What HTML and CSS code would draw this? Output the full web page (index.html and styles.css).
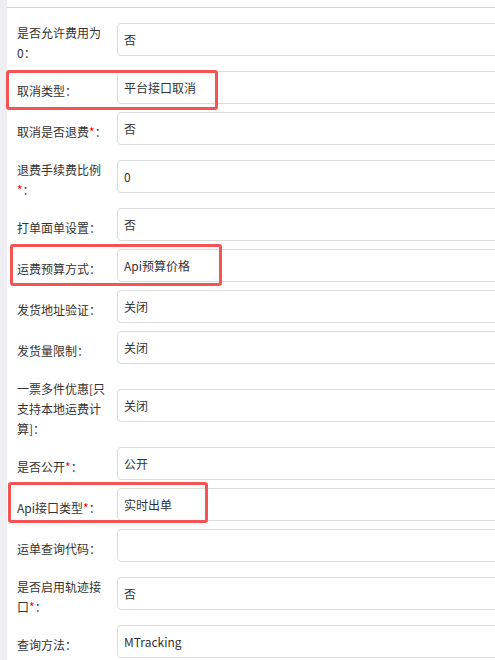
FILE: index.html
```html
<!DOCTYPE html>
<html lang="zh-CN">
<head>
    <meta charset="UTF-8">
    <title>渠道设置</title>
    <link rel="stylesheet" href="styles.css">
</head>
<body>
    <div class="page">
        <div class="side"></div>
        <div class="main">
            <form class="form">
                <div class="row">
                    <label class="label">是否允许费用为0：</label>
                    <input class="field" type="text" value="否" readonly>
                </div>
                <div class="row">
                    <label class="label">取消类型：</label>
                    <input class="field" type="text" value="平台接口取消" readonly>
                </div>
                <div class="row">
                    <label class="label">取消是否退费<span class="req">*</span>：</label>
                    <input class="field" type="text" value="否" readonly>
                </div>
                <div class="row">
                    <label class="label">退费手续费比例<span class="req">*</span>：</label>
                    <input class="field" type="text" value="0" readonly>
                </div>
                <div class="row">
                    <label class="label">打单面单设置：</label>
                    <input class="field" type="text" value="否" readonly>
                </div>
                <div class="row">
                    <label class="label">运费预算方式：</label>
                    <input class="field" type="text" value="Api预算价格" readonly>
                </div>
                <div class="row">
                    <label class="label">发货地址验证：</label>
                    <input class="field" type="text" value="关闭" readonly>
                </div>
                <div class="row">
                    <label class="label">发货量限制：</label>
                    <input class="field" type="text" value="关闭" readonly>
                </div>
                <div class="row">
                    <label class="label">一票多件优惠[只支持本地运费计算]：</label>
                    <input class="field" type="text" value="关闭" readonly>
                </div>
                <div class="row">
                    <label class="label">是否公开<span class="req">*</span>：</label>
                    <input class="field" type="text" value="公开" readonly>
                </div>
                <div class="row">
                    <label class="label">Api接口类型<span class="req">*</span>：</label>
                    <input class="field" type="text" value="实时出单" readonly>
                </div>
                <div class="row">
                    <label class="label">运单查询代码：</label>
                    <input class="field" type="text" value="" readonly>
                </div>
                <div class="row">
                    <label class="label">是否启用轨迹接口<span class="req">*</span>：</label>
                    <input class="field" type="text" value="否" readonly>
                </div>
                <div class="row">
                    <label class="label">查询方法：</label>
                    <input class="field" type="text" value="MTracking" readonly>
                </div>
            </form>
        </div>

        <!-- 标注框 -->
        <div class="mark mark-cancel"></div>
        <div class="mark mark-freight"></div>
        <div class="mark mark-api"></div>
    </div>
</body>
</html>
```

FILE: styles.css
```css
html, body {
    margin: 0;
    height: 100%;
    overflow: hidden;
    background-color: #fff;
}

body {
    font-family: "Noto Sans CJK SC", "Liberation Sans", sans-serif;
    font-size: 12px;
    color: #333;
}

.page {
    position: relative;
    display: flex;
    min-height: 100%;
}

.side {
    width: 7px;
    flex-shrink: 0;
    background-color: #eeeef3;
}

.main {
    flex: 1;
    margin-top: 7px;
    border-top: 1px solid #d2d2d2;
    overflow: hidden;
}

.form {
    margin: 0;
    padding: 8px 0 0 10px;
}

.row {
    display: flex;
    align-items: center;
    margin-bottom: 8px;
}

.label {
    width: 90px;
    flex-shrink: 0;
    margin-right: 10px;
    padding-top: 7px;
    line-height: 20px;
    color: #333;
}

.req {
    color: #f00;
}

.field {
    width: 420px;
    flex-shrink: 0;
    height: 33px;
    box-sizing: border-box;
    padding: 0 6px;
    border: 1px solid #dcdcdc;
    border-radius: 4px;
    font-family: inherit;
    font-size: 12px;
    color: #333;
    background-color: #fff;
    outline: none;
}

.mark {
    position: absolute;
    box-sizing: border-box;
    border: 3px solid #f55454;
    border-radius: 3px;
}

.mark-cancel {
    left: 6px;
    top: 70px;
    width: 212px;
    height: 40px;
}

.mark-freight {
    left: 10px;
    top: 244px;
    width: 212px;
    height: 42px;
}

.mark-api {
    left: 8px;
    top: 482px;
    width: 200px;
    height: 41px;
}
```
